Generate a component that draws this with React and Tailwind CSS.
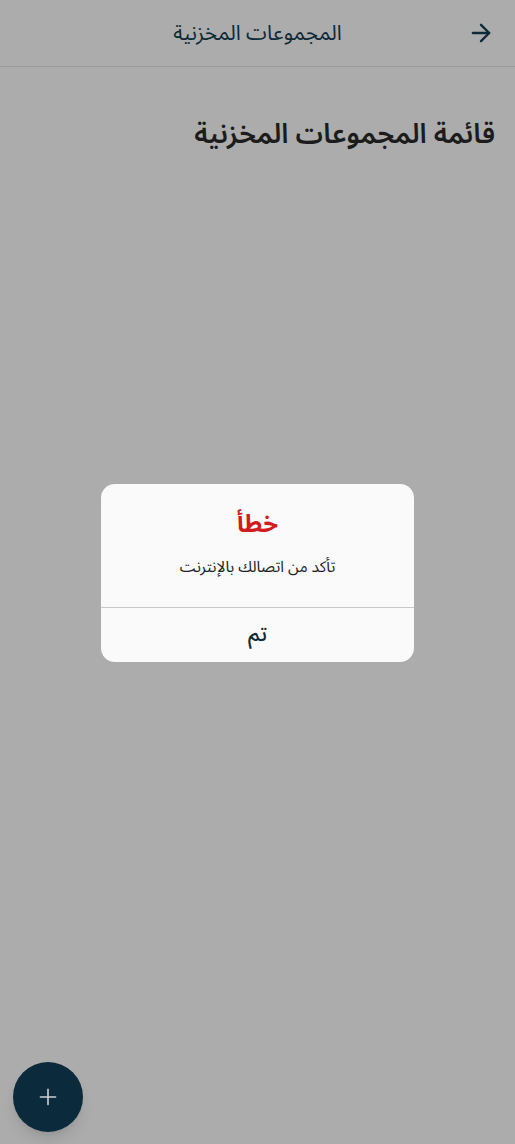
import { ArrowRight, Plus } from "lucide-react";

export default function App() {
  return (
    <div
      dir="rtl"
      className="relative w-[515px] h-[1144px] bg-[#acacac] overflow-hidden font-['Noto_Sans_Arabic','DejaVu_Sans',sans-serif]"
    >
      {/* HEADER */}
      <header className="flex items-center h-[67px] border-b border-[#999] px-[20px]">
        <div className="w-10 flex justify-start">
          <ArrowRight size={28} strokeWidth={2} className="text-[#0e2a38]" />
        </div>
        <h1 className="flex-1 text-center text-[21px] text-[#0e2a38] pl-10 pt-[2px]">المجموعات المخزنية</h1>
      </header>

      {/* PAGE TITLE */}
      <h2 className="px-5 pt-[47px] text-[27.5px] font-semibold text-[#1c1c1c]">قائمة المجموعات المخزنية</h2>

      {/* ALERT */}
      <div className="absolute left-[101px] top-[484px] w-[313px] rounded-[14px] bg-[#fafafa] overflow-hidden">
        <div className="flex flex-col items-center pt-[25px] pb-[30px]">
          <p className="text-[24px] font-bold text-[#d01c1c] leading-8">خطأ</p>
          <p className="mt-[16px] text-[15.5px] text-[#222] leading-5">تأكد من اتصالك بالإنترنت</p>
        </div>
        <div className="border-t border-[#c8c8c8] h-[55px] flex items-center justify-center">
          <span className="text-[21px] font-medium text-[#0e2a38]">تم</span>
        </div>
      </div>

      {/* FAB */}
      <button className="absolute left-[13px] top-[1062px] w-[70px] h-[70px] rounded-full bg-[#0b2a3b] flex items-center justify-center shadow-lg">
        <Plus size={26} strokeWidth={1.5} className="text-[#c9cfd2]" />
      </button>
    </div>
  );
}
